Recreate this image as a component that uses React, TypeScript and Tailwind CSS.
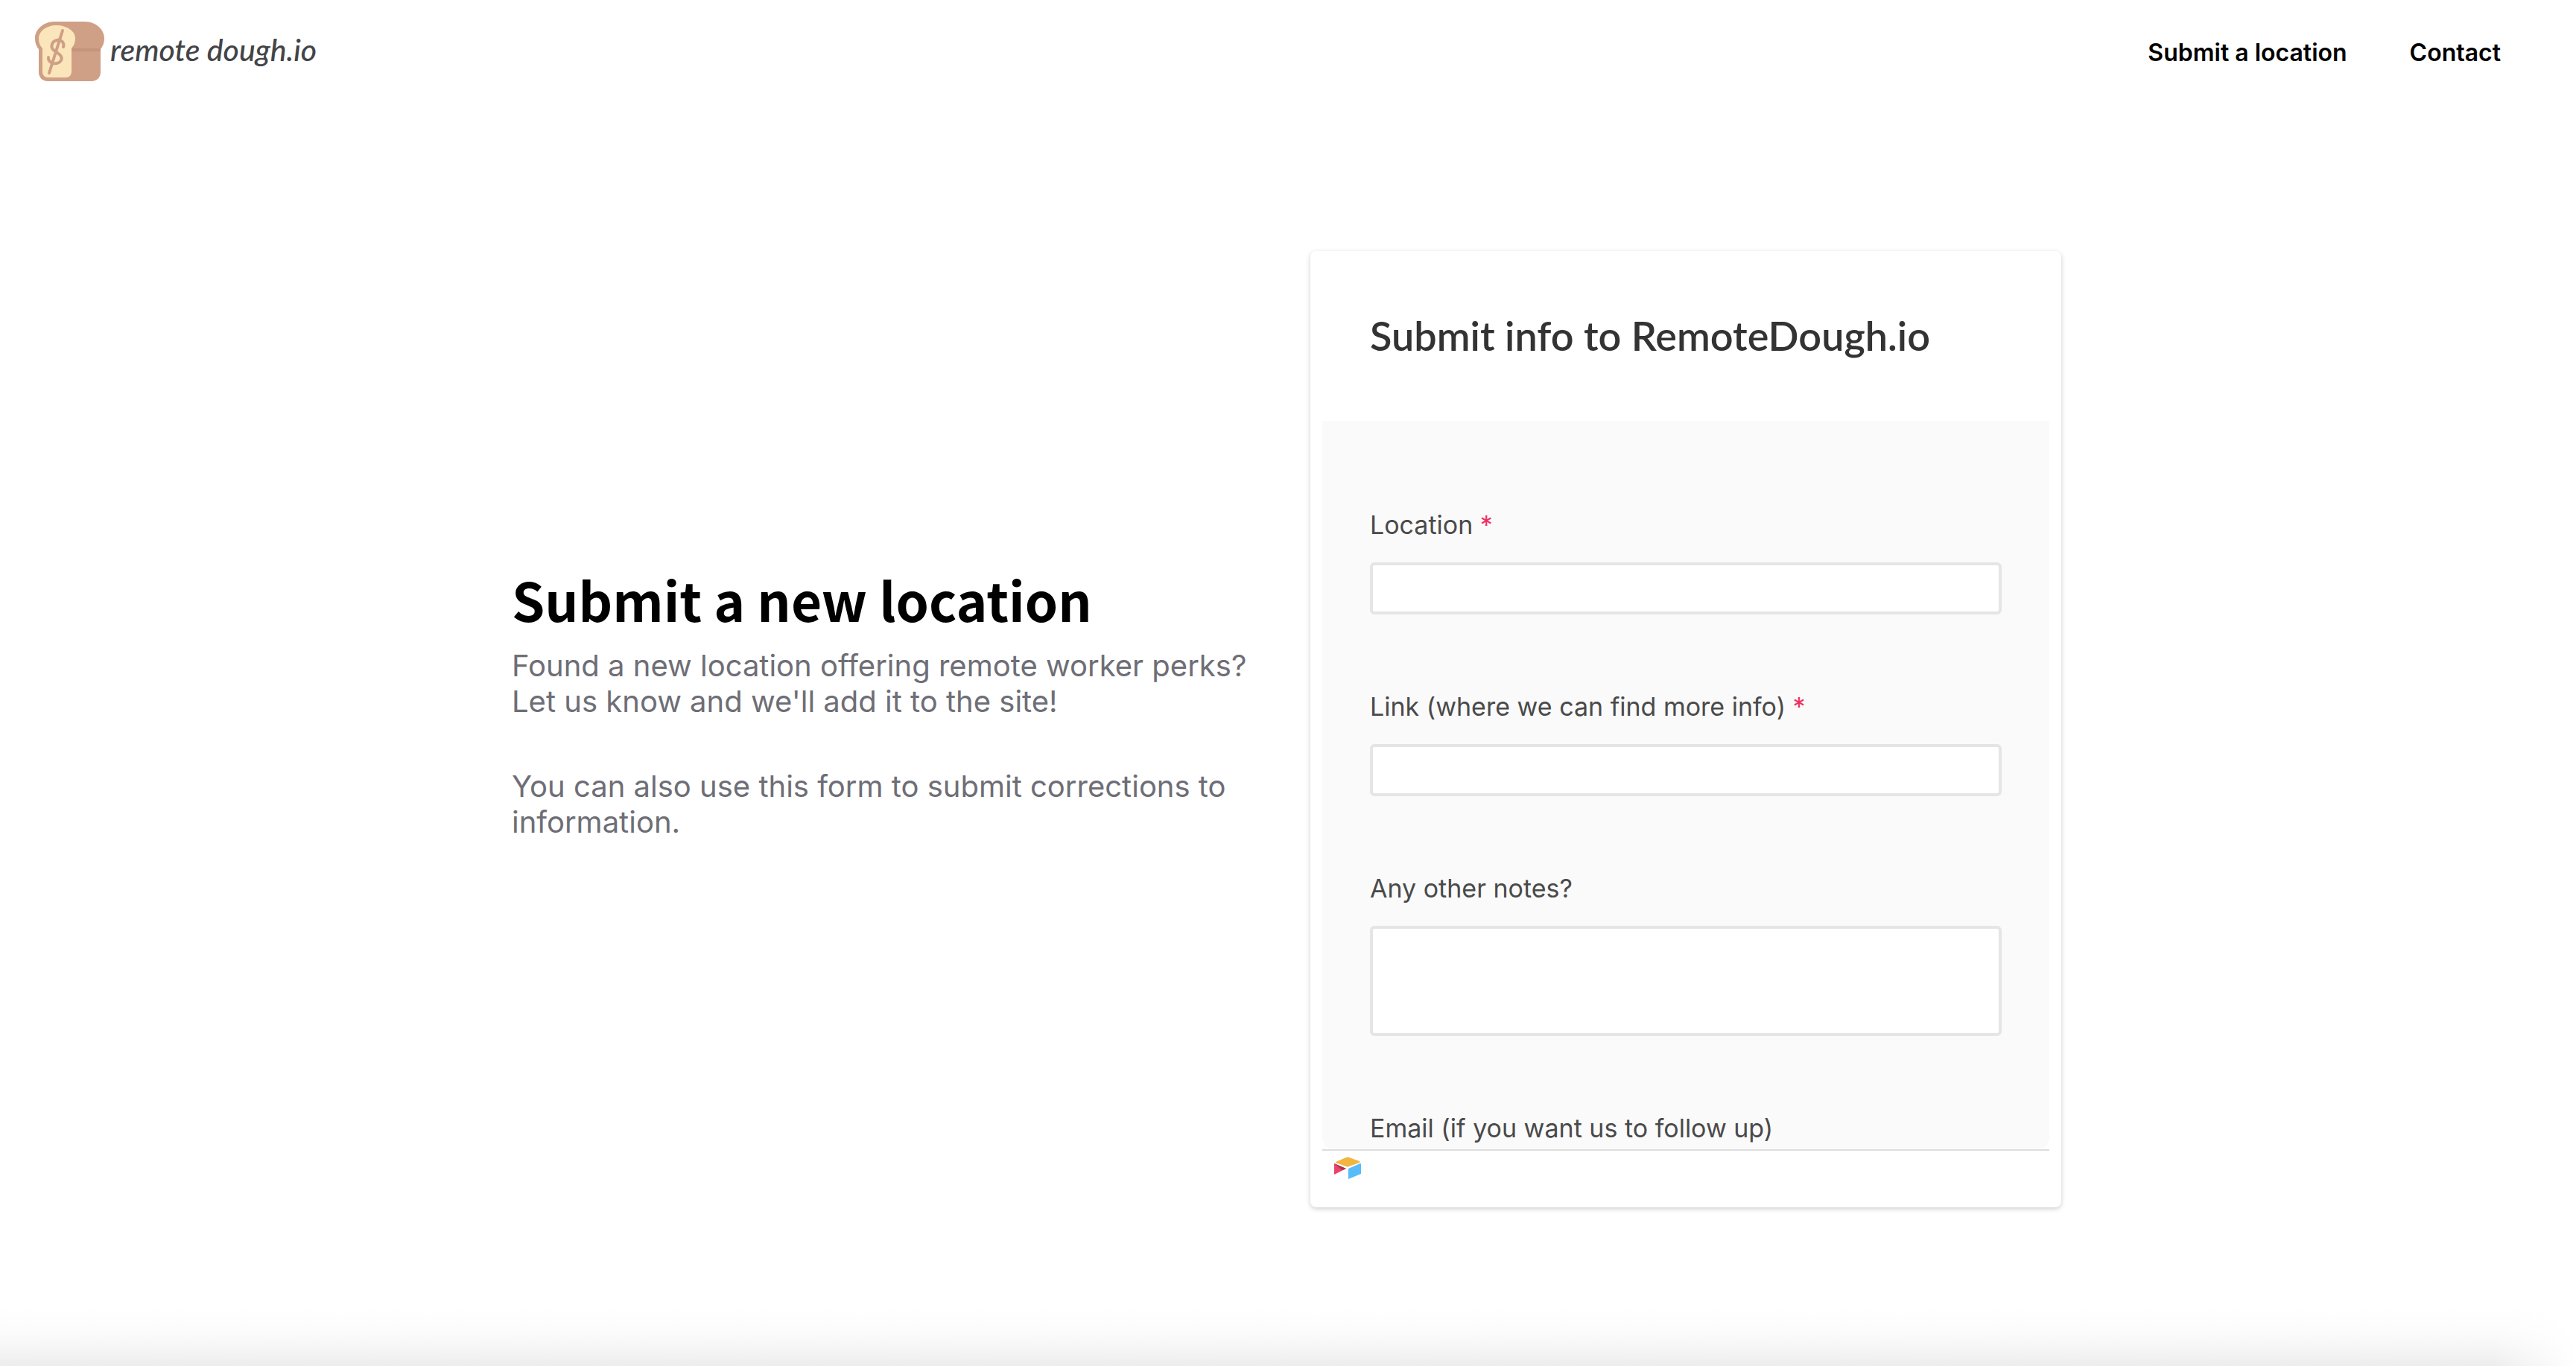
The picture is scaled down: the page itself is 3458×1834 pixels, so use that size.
import React from "react";

const fields = [
  { id: "location", label: "Location", required: true },
  { id: "link", label: "Link (where we can find more info)", required: true },
  { id: "notes", label: "Any other notes?", multiline: true },
];

const BreadLogo = () => (
  <svg viewBox="0 0 93 80" className="h-20 w-[93px]" aria-hidden="true">
    <path
      d="M26 0H67C82 0 93 11 93 22C93 29 91 33 88 37V68C88 75 83 80 76 80H17C10 80 5 75 5 68V37C2 33 0 29 0 22C0 11 11 0 26 0Z"
      fill="#cf9f86"
    />
    <path d="M49 36H88V40H49Z" fill="#c4937b" />
    <path
      d="M29 5C43 5 54 13 54 22C54 29 52 32 49 36V67C49 72 46 75 41 75H18C13 75 10 72 10 67V36C7 32 5 29 5 23C5 13 15 5 29 5Z"
      fill="#fbe6bb"
    />
    <path
      d="M37 12L19 69M38 34C40 28 34 23 29 25C22 27 20 35 26 39C31 43 38 46 35 52C31 59 17 57 18 48"
      fill="none"
      stroke="#cf9f86"
      strokeWidth="4"
      strokeLinecap="round"
    />
  </svg>
);

const AirtableMark = () => (
  <svg viewBox="0 0 36 30" className="h-[30px] w-9" aria-hidden="true">
    <path d="M2 7L16 1Q18 0 20 1L34 6Q35 7 34 8L20 13Q18 14 16 13L2 8Z" fill="#f2b53f" />
    <path d="M0 9L16 16L0 24Z" fill="#e8446a" />
    <path d="M0 9L16 16L11 18Z" fill="#a8324c" />
    <path d="M19 16L35 9Q36 9 36 10V23L19 30Z" fill="#57bcf9" />
  </svg>
);

const Header = () => (
  <header className="flex h-[138px] items-center justify-between pl-[47px] pr-[101px]">
    <a href="#" className="flex items-center gap-2">
      <BreadLogo />
      <span className="pb-1 font-['Lato',sans-serif] text-[41px] font-medium italic leading-[48px] text-[#434447]">
        remote dough.io
      </span>
    </a>
    <nav className="flex gap-[84px] pt-1 font-['Inter',sans-serif] text-[32px] font-semibold leading-[48px] text-black">
      <a href="#submit">Submit a location</a>
      <a href="#contact">Contact</a>
    </nav>
  </header>
);

const SubmitForm = () => (
  <div className="rounded-lg bg-white p-4 shadow-[0_2px_6px_rgba(0,0,0,0.2)]">
    <form className="h-[1190px] overflow-hidden font-['Inter',sans-serif] text-[#4a4a4a]">
      <h2 className="h-[212px] px-16 pt-[62px] font-['Lato',sans-serif] text-[54px] font-semibold leading-[72px] text-[#333333]">
        Submit info to RemoteDough.io
      </h2>
      <div className="h-[978px] overflow-hidden rounded-b-2xl bg-[#fafafa] px-16 pt-[116px]">
        {fields.map(({ id, label, required, multiline }) => (
          <div key={id} className="mb-[100px]">
            <label htmlFor={id} className="block text-[34px] leading-[48px]">
              {label} {required && <span className="text-[#ef3061]">*</span>}
            </label>
            {multiline ? (
              <textarea
                id={id}
                className="mt-[26px] block h-[148px] w-full resize-none rounded-md border-4 border-[#e5e5e5] bg-white px-4 text-[32px]"
              />
            ) : (
              <input
                id={id}
                type="text"
                className="mt-[26px] block h-[70px] w-full rounded-md border-4 border-[#e5e5e5] bg-white px-4 text-[32px]"
              />
            )}
          </div>
        ))}
        <label htmlFor="email" className="block text-[34px] leading-[48px]">
          Email (if you want us to follow up)
        </label>
        <input id="email" type="email" className="mt-[26px] h-[70px] w-full border-4" />
      </div>
    </form>
    <div className="h-[62px] border-t-2 border-[#dddddd] px-4 pt-2">
      <a href="#airtable" aria-label="Airtable" className="inline-block">
        <AirtableMark />
      </a>
    </div>
  </div>
);

export default function App() {
  return (
    <div className="flex min-h-screen flex-col bg-white">
      <Header />
      <main className="px-4 pt-[199px] pr-5">
        <div className="mx-auto grid max-w-[2080px] grid-cols-2 items-center gap-16">
          <section id="submit" className="pb-[74px] font-['Inter',sans-serif] text-[40px] leading-[48px] text-[#6e6e76]">
            <h1 className="mb-[18px] font-['Noto_Sans_CJK_JP',sans-serif] text-[71px] font-bold leading-[96px] text-black">
              Submit a new location
            </h1>
            <p>Found a new location offering remote worker perks? Let us know and we'll add it to the site!</p>
            <p className="mt-[66px]">You can also use this form to submit corrections to information.</p>
          </section>
          <SubmitForm />
        </div>
      </main>
      {/* soft shade along the bottom edge, fading out at the right corner */}
      <div className="mt-auto flex h-20 justify-end bg-[linear-gradient(to_bottom,#ffffff,#fcfcfc_40%,#f7f7f7_65%,#ededed)]">
        <div className="w-28 bg-linear-to-l from-white to-transparent" />
      </div>
    </div>
  );
}
